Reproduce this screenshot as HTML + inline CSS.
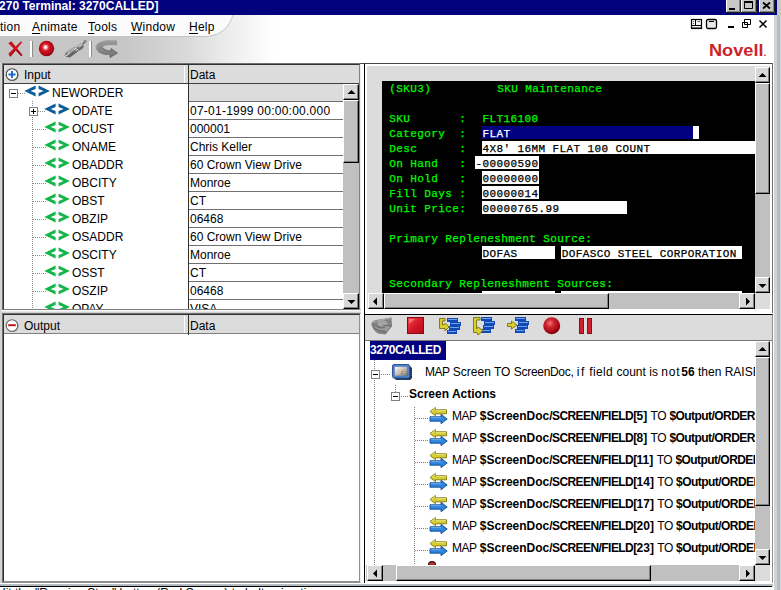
<!DOCTYPE html>
<html>
<head>
<meta charset="utf-8">
<title>3270 Terminal: 3270CALLED</title>
<style>
*{box-sizing:border-box;margin:0;padding:0}
html,body{width:781px;height:590px;overflow:hidden;background:#c8c8c8}
body{position:relative;font-family:"Liberation Sans",Arial,sans-serif;font-size:12px;color:#000}
.abs{position:absolute}
#app{position:absolute;left:0;top:0;width:781px;height:590px;overflow:hidden;background:#fff}
/* title bar */
#title{position:absolute;left:0;top:0;width:777px;height:15px;background:#02027e}
#title .t{position:absolute;left:-1px;top:-2px;font-weight:bold;font-size:13px;color:#fff;white-space:nowrap;letter-spacing:0;transform:scaleX(0.925);transform-origin:0 0}
.wb{position:absolute;top:-3px;height:15px;width:15px;background:#c8c8c8;border:1px solid;border-color:#fff #404040 #404040 #fff;box-shadow:inset -1px -1px 0 #808080}
#frameR{position:absolute;left:777px;top:0;width:4px;height:590px;background:#c8c8c8}
/* menu + toolbar */
#hdr{position:absolute;left:0;top:15px;width:776px;height:48px;background:linear-gradient(90deg,#c5c5c5 0,#c7c7c7 125px,#d9d9d9 185px,#eeeeee 232px,#fff 275px)}
#menu{position:absolute;left:0;top:15px;height:22px;width:240px}
.mi{position:absolute;top:5px;font-size:12px;white-space:nowrap;letter-spacing:0.25px}
.mi u{text-decoration:underline;text-underline-offset:2px}
/* generic */
.hdrcell{position:absolute;background:#dcdcdc;font-size:12px;white-space:nowrap}
.sbtn{position:absolute;background:#c8c8c8;border:1px solid;border-color:#fff #404040 #404040 #fff;box-shadow:inset -1px -1px 0 #808080, inset 1px 1px 0 #dcdcdc}
.track{position:absolute;background:#c0c0c0}
.row{position:absolute;left:0;height:18px;white-space:nowrap;font-size:12px}
.mono{font-family:"Liberation Mono","Courier New",monospace}
</style>
</head>
<body>
<div id="app">
<!-- TITLE -->
<div id="title"><span class="t">270 Terminal: 3270CALLED]</span></div>
<div id="frameR"></div>
<!-- HEADER -->
<div id="hdr"></div>

<svg class="abs" style="left:0;top:15px" width="240" height="23" viewBox="0 0 240 23">
<path d="M0,0 L233,0 C230,9 224,21 204,21.5 L0,21.5 Z" fill="#fbfbfb"/>
<path d="M233,0 C230,9 224,21 204,21.5 L0,21.5" fill="none" stroke="#c4c4c4" stroke-width="1"/>
</svg>
<div id="menu">
<span class="mi" style="left:0">tion</span>
<span class="mi" style="left:32px"><u>A</u>nimate</span>
<span class="mi" style="left:88px"><u>T</u>ools</span>
<span class="mi" style="left:131px"><u>W</u>indow</span>
<span class="mi" style="left:189px"><u>H</u>elp</span>
</div>
<!-- toolbar icons -->
<svg class="abs" style="left:0;top:37px" width="130" height="26" viewBox="0 0 130 26">
<defs>
<radialGradient id="rb" cx="0.44" cy="0.42" r="0.56"><stop offset="0" stop-color="#fff"/><stop offset="0.16" stop-color="#ffd8d8"/><stop offset="0.32" stop-color="#e84048"/><stop offset="0.5" stop-color="#c81020"/><stop offset="0.85" stop-color="#b00818"/><stop offset="1" stop-color="#900010"/></radialGradient>
<linearGradient id="sw" x1="0" y1="0" x2="0" y2="1"><stop offset="0" stop-color="#9c9c9c"/><stop offset="1" stop-color="#747474"/></linearGradient>
</defs>
<path d="M8.300,6.200 L11.300,4.200 L22.600,18 L21.300,19.300 Z" fill="#cc1020"/>
<path d="M22.400,5 L20.800,4.400 L8.300,16.800 L10.400,19.600 Z" fill="#cc1020"/>
<path d="M9.500,18.500 L10.400,19.300 L15.500,13 M17,13.500 L21.500,19" stroke="#500008" stroke-width="0.7" fill="none"/>
<rect x="30" y="4" width="2" height="16" fill="#fff"/><rect x="32" y="4" width="1" height="16" fill="#8c8c8c"/>
<circle cx="46.500" cy="11.500" r="7.700" fill="url(#rb)"/>
<g>
<path d="M64.500,19 L66,15.500 L74,10 L78,11 L78,14.500 L70,20.500 L66.500,20 Z" fill="#666"/>
<path d="M66,15.500 L74,10 L78,11 L70,16.500 Z" fill="#a8a8a8"/>
<path d="M64.600,19.600 L69.500,16.300" stroke="#e4e4e4" stroke-width="1.100"/>
<path d="M76.500,9.500 L80.500,6.500 L83.500,7.500 L83.500,10.800 L79.500,13.800 L76.500,12.800 Z" fill="#6c6c6c"/>
<path d="M76.500,9.500 L80.500,6.500 L83.500,7.500 L79.500,10.500 Z" fill="#b8b8b8"/>
<path d="M74.300,12.400 L76.800,10.600 M75.600,13.900 L78.100,12.100" stroke="#f6f6f6" stroke-width="0.9"/>
<path d="M82.800,7 L85,4.800" stroke="#6c6c6c" stroke-width="1.700"/>
<circle cx="85.200" cy="4.300" r="1.100" fill="#c8c8c8" stroke="#585858" stroke-width="0.7"/>
</g>
<rect x="89" y="4" width="2" height="16" fill="#fff"/><rect x="91" y="4" width="1" height="16" fill="#8c8c8c"/>
<path d="M117,3.500 L117,8.500 C110,7.500 104,8 102.500,10.500 C104,13 108,14 111,14 L111,11.500 L117.500,16 L110,20.500 L110,18 C102,18.500 96,15.500 96,10 C96,5 106,2.500 117,3.500 Z" fill="url(#sw)"/>
<path d="M117,3.500 C106,2.500 96,5 96,10 C96,12 97,14 99,15.500" fill="none" stroke="#a8a8a8" stroke-width="1"/>
<path d="M102.500,10.500 C104,13 108,14 111,14 L111,11.500 L117.500,16 L110,20.500 L110,18" fill="none" stroke="#5c5c5c" stroke-width="0.8"/>
</svg>
<!-- mdi buttons / logo -->
<svg class="abs" style="left:686px;top:15px" width="90" height="20" viewBox="0 0 90 20">
<rect x="5.500" y="4.500" width="10" height="9" fill="#f4f4f4" stroke="#000" stroke-width="1.200"/><path d="M9.500,4.500 V10.500 M5.500,10.500 H15.500" stroke="#000" fill="none"/><rect x="5" y="12.500" width="11" height="1.500" fill="#000"/><path d="M7,6.500 H8 M7,8.500 H8 M11.500,6.500 H14" stroke="#606060"/>
<rect x="20.500" y="4.500" width="10" height="9" rx="1.500" fill="#e8e8e8" stroke="#000" stroke-width="1.300"/><path d="M23,6.500 H28" stroke="#000"/>
<rect x="42" y="11" width="6" height="2" fill="#000"/>
<path d="M58.500,4.500 H64.500 V9.500 H58.500 Z M56.500,7.500 H61.500 V12.500 H56.500 Z" fill="#fff" stroke="#000"/>
<path d="M73.500,5.500 L80.500,12.500 M80.500,5.500 L73.500,12.500" stroke="#000" stroke-width="1.5"/>
</svg>
<div class="abs" style="left:709px;top:42px;font-size:16px;font-weight:bold;color:#cc2229;letter-spacing:0;transform:scaleX(1.135);transform-origin:0 0;white-space:nowrap">Novell<span style="font-size:9px">.</span></div>
<!-- window buttons -->
<svg class="abs" style="left:724px;top:0" width="53" height="15" viewBox="0 0 53 15">
<g>
<rect x="2" y="-3" width="15" height="16" fill="#c8c8c8"/><path d="M2.500,13 V-3" stroke="#fff"/><path d="M16.500,-3 V12.500 H2" stroke="#202020" fill="none"/><path d="M15.500,-3 V11.500 H3" stroke="#808080" fill="none"/>
<rect x="5" y="8" width="6" height="2" fill="#000"/>
<rect x="17" y="-3" width="16" height="16" fill="#c8c8c8"/><path d="M17.500,13 V-3" stroke="#fff"/><path d="M32.500,-3 V12.500 H17" stroke="#202020" fill="none"/><path d="M31.500,-3 V11.500 H18" stroke="#808080" fill="none"/>
<path d="M20.500,2 V8.500 H28.500 V2" stroke="#000" fill="none"/><rect x="20" y="1" width="9" height="2" fill="#000"/>
<rect x="35" y="-3" width="16" height="16" fill="#c8c8c8"/><path d="M35.500,13 V-3" stroke="#fff"/><path d="M50.500,-3 V12.500 H35" stroke="#202020" fill="none"/><path d="M49.500,-3 V11.500 H36" stroke="#808080" fill="none"/>
<path d="M39,2.500 L46,8.500 M46,2.500 L39,8.500" stroke="#000" stroke-width="1.700"/>
</g>
</svg>
<!--LEFT_START-->
<div class="abs" style="left:0;top:63px;width:776px;height:527px;background:#dcdcdc"></div>
<div class="abs" style="left:0;top:63px;width:2px;height:527px;background:#d4d4d4"></div>
<div class="abs" style="left:2px;top:63px;width:359px;height:247px;background:#fff;border-left:1px solid #707070;border-top:1px solid #707070;border-right:1px solid #f0f0f0;border-bottom:1px solid #808080"></div>
<div class="abs" style="left:3px;top:64px;width:357px;height:245px;border-left:1px solid #303030;border-top:1px solid #303030;border-right:1px solid #808080"></div>
<div class="abs" style="left:4px;top:65px;width:355px;height:19px;background:#dcdcdc;border-bottom:1px solid #404040"></div>
<div class="abs" style="left:184px;top:66px;width:1px;height:17px;background:#fff"></div>
<svg class="abs" style="left:4.500px;top:67px" width="15" height="15" viewBox="0 0 15 15"><defs><linearGradient id="cg" x1="0" y1="0" x2="1" y2="1"><stop offset="0" stop-color="#303030"/><stop offset="1" stop-color="#b0b0b0"/></linearGradient></defs><circle cx="7.600" cy="8.100" r="6" fill="#8c8c8c"/><circle cx="7" cy="7.500" r="5.800" fill="#fff" stroke="#484848" stroke-width="1.100"/><path d="M3.500,7.500 H10.500 M7,4 V11" stroke="#1468c8" stroke-width="1.900"/></svg>
<div class="abs" style="left:24px;top:68px;font-size:12px">Input</div>
<div class="abs" style="left:190px;top:68px;font-size:12px">Data</div>
<div class="abs" style="left:5px;top:84px;width:338px;height:225px;overflow:hidden">
<svg class="abs" style="left:4px;top:5px" width="9" height="9" viewBox="0 0 9 9"><rect x="0.500" y="0.500" width="8" height="8" fill="#fff" stroke="#808080"/><path d="M2,4.500 H7" stroke="#000"/></svg>
<div class="abs" style="left:13px;top:9px;width:8px;height:1px;background:repeating-linear-gradient(90deg,#8c8c8c 0 1px,transparent 1px 2px)"></div>
<svg class="abs" style="left:19px;top:2px;overflow:visible" width="27" height="11" viewBox="-1 0 27 11"><path d="M-0.700,5 L10.600,-0.400 L10.600,2.900 L5.600,5 L10.600,7.100 L10.600,10.400 Z" fill="#0b5d98"/><path d="M24.900,5 L13.600,-0.400 L13.600,2.900 L18.600,5 L13.600,7.100 L13.600,10.400 Z" fill="#0b5d98"/></svg>
<div class="abs" style="left:47px;top:2px;font-size:12px;white-space:nowrap">NEWORDER</div>
<div class="abs" style="left:184px;top:0px;width:154px;height:18px;background:#dcdcdc;border-bottom:1px solid #707070;padding:2px 0 0 1px;font-size:12px;white-space:nowrap;overflow:hidden"></div>
<div class="abs" style="left:33px;top:27px;width:8px;height:1px;background:repeating-linear-gradient(90deg,#8c8c8c 0 1px,transparent 1px 2px)"></div>
<svg class="abs" style="left:39px;top:20px;overflow:visible" width="27" height="11" viewBox="-1 0 27 11"><path d="M-0.700,5 L10.600,-0.400 L10.600,2.900 L5.600,5 L10.600,7.100 L10.600,10.400 Z" fill="#0b5d98"/><path d="M24.900,5 L13.600,-0.400 L13.600,2.900 L18.600,5 L13.600,7.100 L13.600,10.400 Z" fill="#0b5d98"/></svg>
<div class="abs" style="left:67px;top:20px;font-size:12px;white-space:nowrap">ODATE</div>
<div class="abs" style="left:184px;top:18px;width:154px;height:18px;background:#fff;border-bottom:1px solid #707070;padding:2px 0 0 1px;font-size:12px;white-space:nowrap;overflow:hidden"><span style="letter-spacing:0.24px">07-01-1999 00:00:00.000</span></div>
<div class="abs" style="left:28px;top:45px;width:13px;height:1px;background:repeating-linear-gradient(90deg,#8c8c8c 0 1px,transparent 1px 2px)"></div>
<svg class="abs" style="left:39px;top:38px;overflow:visible" width="27" height="11" viewBox="-1 0 27 11"><path d="M-0.700,5 L10.600,-0.400 L10.600,2.900 L5.600,5 L10.600,7.100 L10.600,10.400 Z" fill="#14b54a"/><path d="M24.900,5 L13.600,-0.400 L13.600,2.900 L18.600,5 L13.600,7.100 L13.600,10.400 Z" fill="#14b54a"/></svg>
<div class="abs" style="left:67px;top:38px;font-size:12px;white-space:nowrap">OCUST</div>
<div class="abs" style="left:184px;top:36px;width:154px;height:18px;background:#fff;border-bottom:1px solid #707070;padding:2px 0 0 1px;font-size:12px;white-space:nowrap;overflow:hidden">000001</div>
<div class="abs" style="left:28px;top:63px;width:13px;height:1px;background:repeating-linear-gradient(90deg,#8c8c8c 0 1px,transparent 1px 2px)"></div>
<svg class="abs" style="left:39px;top:56px;overflow:visible" width="27" height="11" viewBox="-1 0 27 11"><path d="M-0.700,5 L10.600,-0.400 L10.600,2.900 L5.600,5 L10.600,7.100 L10.600,10.400 Z" fill="#14b54a"/><path d="M24.900,5 L13.600,-0.400 L13.600,2.900 L18.600,5 L13.600,7.100 L13.600,10.400 Z" fill="#14b54a"/></svg>
<div class="abs" style="left:67px;top:56px;font-size:12px;white-space:nowrap">ONAME</div>
<div class="abs" style="left:184px;top:54px;width:154px;height:18px;background:#fff;border-bottom:1px solid #707070;padding:2px 0 0 1px;font-size:12px;white-space:nowrap;overflow:hidden">Chris Keller</div>
<div class="abs" style="left:28px;top:81px;width:13px;height:1px;background:repeating-linear-gradient(90deg,#8c8c8c 0 1px,transparent 1px 2px)"></div>
<svg class="abs" style="left:39px;top:74px;overflow:visible" width="27" height="11" viewBox="-1 0 27 11"><path d="M-0.700,5 L10.600,-0.400 L10.600,2.900 L5.600,5 L10.600,7.100 L10.600,10.400 Z" fill="#14b54a"/><path d="M24.900,5 L13.600,-0.400 L13.600,2.900 L18.600,5 L13.600,7.100 L13.600,10.400 Z" fill="#14b54a"/></svg>
<div class="abs" style="left:67px;top:74px;font-size:12px;white-space:nowrap">OBADDR</div>
<div class="abs" style="left:184px;top:72px;width:154px;height:18px;background:#fff;border-bottom:1px solid #707070;padding:2px 0 0 1px;font-size:12px;white-space:nowrap;overflow:hidden">60 Crown View Drive</div>
<div class="abs" style="left:28px;top:99px;width:13px;height:1px;background:repeating-linear-gradient(90deg,#8c8c8c 0 1px,transparent 1px 2px)"></div>
<svg class="abs" style="left:39px;top:92px;overflow:visible" width="27" height="11" viewBox="-1 0 27 11"><path d="M-0.700,5 L10.600,-0.400 L10.600,2.900 L5.600,5 L10.600,7.100 L10.600,10.400 Z" fill="#14b54a"/><path d="M24.900,5 L13.600,-0.400 L13.600,2.900 L18.600,5 L13.600,7.100 L13.600,10.400 Z" fill="#14b54a"/></svg>
<div class="abs" style="left:67px;top:92px;font-size:12px;white-space:nowrap">OBCITY</div>
<div class="abs" style="left:184px;top:90px;width:154px;height:18px;background:#fff;border-bottom:1px solid #707070;padding:2px 0 0 1px;font-size:12px;white-space:nowrap;overflow:hidden">Monroe</div>
<div class="abs" style="left:28px;top:117px;width:13px;height:1px;background:repeating-linear-gradient(90deg,#8c8c8c 0 1px,transparent 1px 2px)"></div>
<svg class="abs" style="left:39px;top:110px;overflow:visible" width="27" height="11" viewBox="-1 0 27 11"><path d="M-0.700,5 L10.600,-0.400 L10.600,2.900 L5.600,5 L10.600,7.100 L10.600,10.400 Z" fill="#14b54a"/><path d="M24.900,5 L13.600,-0.400 L13.600,2.900 L18.600,5 L13.600,7.100 L13.600,10.400 Z" fill="#14b54a"/></svg>
<div class="abs" style="left:67px;top:110px;font-size:12px;white-space:nowrap">OBST</div>
<div class="abs" style="left:184px;top:108px;width:154px;height:18px;background:#fff;border-bottom:1px solid #707070;padding:2px 0 0 1px;font-size:12px;white-space:nowrap;overflow:hidden">CT</div>
<div class="abs" style="left:28px;top:135px;width:13px;height:1px;background:repeating-linear-gradient(90deg,#8c8c8c 0 1px,transparent 1px 2px)"></div>
<svg class="abs" style="left:39px;top:128px;overflow:visible" width="27" height="11" viewBox="-1 0 27 11"><path d="M-0.700,5 L10.600,-0.400 L10.600,2.900 L5.600,5 L10.600,7.100 L10.600,10.400 Z" fill="#14b54a"/><path d="M24.900,5 L13.600,-0.400 L13.600,2.900 L18.600,5 L13.600,7.100 L13.600,10.400 Z" fill="#14b54a"/></svg>
<div class="abs" style="left:67px;top:128px;font-size:12px;white-space:nowrap">OBZIP</div>
<div class="abs" style="left:184px;top:126px;width:154px;height:18px;background:#fff;border-bottom:1px solid #707070;padding:2px 0 0 1px;font-size:12px;white-space:nowrap;overflow:hidden">06468</div>
<div class="abs" style="left:28px;top:153px;width:13px;height:1px;background:repeating-linear-gradient(90deg,#8c8c8c 0 1px,transparent 1px 2px)"></div>
<svg class="abs" style="left:39px;top:146px;overflow:visible" width="27" height="11" viewBox="-1 0 27 11"><path d="M-0.700,5 L10.600,-0.400 L10.600,2.900 L5.600,5 L10.600,7.100 L10.600,10.400 Z" fill="#14b54a"/><path d="M24.900,5 L13.600,-0.400 L13.600,2.900 L18.600,5 L13.600,7.100 L13.600,10.400 Z" fill="#14b54a"/></svg>
<div class="abs" style="left:67px;top:146px;font-size:12px;white-space:nowrap">OSADDR</div>
<div class="abs" style="left:184px;top:144px;width:154px;height:18px;background:#fff;border-bottom:1px solid #707070;padding:2px 0 0 1px;font-size:12px;white-space:nowrap;overflow:hidden">60 Crown View Drive</div>
<div class="abs" style="left:28px;top:171px;width:13px;height:1px;background:repeating-linear-gradient(90deg,#8c8c8c 0 1px,transparent 1px 2px)"></div>
<svg class="abs" style="left:39px;top:164px;overflow:visible" width="27" height="11" viewBox="-1 0 27 11"><path d="M-0.700,5 L10.600,-0.400 L10.600,2.900 L5.600,5 L10.600,7.100 L10.600,10.400 Z" fill="#14b54a"/><path d="M24.900,5 L13.600,-0.400 L13.600,2.900 L18.600,5 L13.600,7.100 L13.600,10.400 Z" fill="#14b54a"/></svg>
<div class="abs" style="left:67px;top:164px;font-size:12px;white-space:nowrap">OSCITY</div>
<div class="abs" style="left:184px;top:162px;width:154px;height:18px;background:#fff;border-bottom:1px solid #707070;padding:2px 0 0 1px;font-size:12px;white-space:nowrap;overflow:hidden">Monroe</div>
<div class="abs" style="left:28px;top:189px;width:13px;height:1px;background:repeating-linear-gradient(90deg,#8c8c8c 0 1px,transparent 1px 2px)"></div>
<svg class="abs" style="left:39px;top:182px;overflow:visible" width="27" height="11" viewBox="-1 0 27 11"><path d="M-0.700,5 L10.600,-0.400 L10.600,2.900 L5.600,5 L10.600,7.100 L10.600,10.400 Z" fill="#14b54a"/><path d="M24.900,5 L13.600,-0.400 L13.600,2.900 L18.600,5 L13.600,7.100 L13.600,10.400 Z" fill="#14b54a"/></svg>
<div class="abs" style="left:67px;top:182px;font-size:12px;white-space:nowrap">OSST</div>
<div class="abs" style="left:184px;top:180px;width:154px;height:18px;background:#fff;border-bottom:1px solid #707070;padding:2px 0 0 1px;font-size:12px;white-space:nowrap;overflow:hidden">CT</div>
<div class="abs" style="left:28px;top:207px;width:13px;height:1px;background:repeating-linear-gradient(90deg,#8c8c8c 0 1px,transparent 1px 2px)"></div>
<svg class="abs" style="left:39px;top:200px;overflow:visible" width="27" height="11" viewBox="-1 0 27 11"><path d="M-0.700,5 L10.600,-0.400 L10.600,2.900 L5.600,5 L10.600,7.100 L10.600,10.400 Z" fill="#14b54a"/><path d="M24.900,5 L13.600,-0.400 L13.600,2.900 L18.600,5 L13.600,7.100 L13.600,10.400 Z" fill="#14b54a"/></svg>
<div class="abs" style="left:67px;top:200px;font-size:12px;white-space:nowrap">OSZIP</div>
<div class="abs" style="left:184px;top:198px;width:154px;height:18px;background:#fff;border-bottom:1px solid #707070;padding:2px 0 0 1px;font-size:12px;white-space:nowrap;overflow:hidden">06468</div>
<div class="abs" style="left:28px;top:225px;width:13px;height:1px;background:repeating-linear-gradient(90deg,#8c8c8c 0 1px,transparent 1px 2px)"></div>
<svg class="abs" style="left:39px;top:218px;overflow:visible" width="27" height="11" viewBox="-1 0 27 11"><path d="M-0.700,5 L10.600,-0.400 L10.600,2.900 L5.600,5 L10.600,7.100 L10.600,10.400 Z" fill="#14b54a"/><path d="M24.900,5 L13.600,-0.400 L13.600,2.900 L18.600,5 L13.600,7.100 L13.600,10.400 Z" fill="#14b54a"/></svg>
<div class="abs" style="left:67px;top:218px;font-size:12px;white-space:nowrap">OPAY</div>
<div class="abs" style="left:184px;top:216px;width:154px;height:18px;background:#fff;border-bottom:1px solid #707070;padding:2px 0 0 1px;font-size:12px;white-space:nowrap;overflow:hidden">VISA</div>
<div class="abs" style="left:27px;top:17px;width:1px;height:210px;background:repeating-linear-gradient(180deg,#8c8c8c 0 1px,transparent 1px 2px)"></div>
<svg class="abs" style="left:24px;top:23px" width="9" height="9" viewBox="0 0 9 9"><rect x="0.500" y="0.500" width="8" height="8" fill="#fff" stroke="#808080"/><path d="M2,4.500 H7" stroke="#000"/><path d="M4.500,2 V7" stroke="#000"/></svg>
</div>
<div class="abs" style="left:188px;top:65px;width:1px;height:244px;background:#303030"></div>
<div class="abs" style="left:343px;top:84px;width:16px;height:225px;background:#c0c0c0"></div>
<div class="abs" style="left:343px;top:84px;width:16px;height:16px;background:#d8d8d8;border:1px solid;border-color:#fff #000 #000 #fff;box-shadow:inset -1px -1px 0 #808080"></div>
<svg class="abs" style="left:347px;top:89px" width="9" height="6" viewBox="0 0 9 6"><path d="M0.500,5 L4.500,1 L8.500,5 Z" fill="#000"/></svg>
<div class="abs" style="left:343px;top:100px;width:16px;height:63px;background:#c0c0c0;border:1px solid;border-color:#fff #000 #000 #fff;box-shadow:inset -1px -1px 0 #808080"></div>
<div class="abs" style="left:343px;top:293px;width:16px;height:16px;background:#d8d8d8;border:1px solid;border-color:#fff #000 #000 #fff;box-shadow:inset -1px -1px 0 #808080"></div>
<svg class="abs" style="left:347px;top:299px" width="9" height="6" viewBox="0 0 9 6"><path d="M0.500,1 L4.500,5 L8.500,1 Z" fill="#000"/></svg>
<!--LEFT_END-->

<!--RIGHT_START-->
<div class="abs" style="left:361px;top:63px;width:3px;height:520px;background:#fff"></div>
<div class="abs" style="left:360px;top:63px;width:4px;height:1px;background:#505050"></div>
<div class="abs" style="left:2px;top:310px;width:359px;height:3px;background:linear-gradient(180deg,#fff,#e8e8e8 50%,#c8c8c8)"></div>
<div class="abs" style="left:2px;top:313px;width:359px;height:270px;background:#fff;border-left:1px solid #707070;border-top:1px solid #707070;border-right:1px solid #f0f0f0;border-bottom:1px solid #909090"></div>
<div class="abs" style="left:3px;top:314px;width:357px;height:268px;border-left:1px solid #303030;border-top:1px solid #303030;border-right:1px solid #909090;border-bottom:1px solid #909090"></div>
<div class="abs" style="left:4px;top:315px;width:355px;height:19px;background:#dcdcdc;border-bottom:1px solid #808080"></div>
<div class="abs" style="left:184px;top:316px;width:1px;height:17px;background:#fff"></div>
<div class="abs" style="left:188px;top:315px;width:1px;height:20px;background:#303030"></div>
<svg class="abs" style="left:4.500px;top:318px" width="15" height="15" viewBox="0 0 15 15"><defs><linearGradient id="cg2" x1="0" y1="0" x2="1" y2="1"><stop offset="0" stop-color="#a0a0a0"/><stop offset="1" stop-color="#505050"/></linearGradient></defs><circle cx="7.600" cy="8.100" r="6" fill="#8c8c8c"/><circle cx="7" cy="7.500" r="5.800" fill="#fff" stroke="#686868" stroke-width="1.100"/><path d="M3.200,7.200 H10.800" stroke="#c01420" stroke-width="2"/></svg>
<div class="abs" style="left:24px;top:319px;font-size:12px">Output</div>
<div class="abs" style="left:190px;top:319px;font-size:12px">Data</div>
<div class="abs" style="left:364px;top:63px;width:409px;height:250px;background:#dcdcdc;border-top:1px solid #484848;border-left:1px solid #000;border-right:1px solid #707070"></div>
<div class="abs" style="left:365px;top:64px;width:407px;height:2px;background:#fff"></div>
<div class="abs" style="left:365px;top:65px;width:2px;height:248px;background:#fff"></div>
<div class="abs" style="left:770px;top:65px;width:2px;height:248px;background:#fff"></div>
<div class="abs" style="left:365px;top:309px;width:407px;height:4px;background:#fff"></div>
<div class="abs mono" style="left:368px;top:67px;width:387px;height:226px;overflow:hidden;background:#dcdcdc;font-size:11px;line-height:15px;letter-spacing:0.4px;white-space:pre;-webkit-text-stroke:0.25px;color:#00fa00">
<div class="abs" style="left:14px;top:14px;width:600px;height:400px;background:#000"></div>
<span class="abs" style="left:21.2px;top:15px">(SKU3)</span>
<span class="abs" style="left:129.2px;top:15px">SKU Maintenance</span>
<span class="abs" style="left:21.2px;top:45px">SKU       :</span>
<span class="abs" style="left:21.2px;top:60px">Category  :</span>
<span class="abs" style="left:21.2px;top:75px">Desc      :</span>
<span class="abs" style="left:21.2px;top:90px">On Hand   :</span>
<span class="abs" style="left:21.2px;top:105px">On Hold   :</span>
<span class="abs" style="left:21.2px;top:120px">Fill Days :</span>
<span class="abs" style="left:21.2px;top:135px">Unit Price:</span>
<span class="abs" style="left:114.6px;top:45px">FLT16100</span>
<div class="abs" style="left:114.0px;top:59.3px;width:216.8px;height:12.300px;background:#fff"></div>
<div class="abs" style="left:114.0px;top:59.3px;width:211.2px;height:12.300px;background:#000080"></div>
<span class="abs" style="left:114.6px;top:60px;color:#fff;-webkit-text-stroke:0.25px">FLAT</span>
<div class="abs" style="left:114.0px;top:74.3px;width:432.8px;height:12.300px;background:#fff"></div>
<span class="abs" style="left:114.6px;top:75px;color:#000;-webkit-text-stroke:0.25px">4X8' 16MM FLAT 100 COUNT</span>
<div class="abs" style="left:106.8px;top:89.3px;width:64.4px;height:12.300px;background:#fff"></div>
<span class="abs" style="left:107.4px;top:90px;color:#000;-webkit-text-stroke:0.25px">-00000590</span>
<div class="abs" style="left:114.0px;top:104.3px;width:57.2px;height:12.300px;background:#fff"></div>
<span class="abs" style="left:114.6px;top:105px;color:#000;-webkit-text-stroke:0.25px">00000000</span>
<div class="abs" style="left:114.0px;top:119.3px;width:57.2px;height:12.300px;background:#fff"></div>
<span class="abs" style="left:114.6px;top:120px;color:#000;-webkit-text-stroke:0.25px">00000014</span>
<div class="abs" style="left:114.0px;top:134.3px;width:144.8px;height:12.300px;background:#fff"></div>
<span class="abs" style="left:114.6px;top:135px;color:#000;-webkit-text-stroke:0.25px">00000765.99</span>
<span class="abs" style="left:21.2px;top:165px">Primary Repleneshment Source:</span>
<div class="abs" style="left:114.0px;top:179.3px;width:72.8px;height:12.300px;background:#fff"></div>
<span class="abs" style="left:114.6px;top:180px;color:#000;-webkit-text-stroke:0.25px">DOFAS</span>
<div class="abs" style="left:193.2px;top:179.3px;width:180.8px;height:12.300px;background:#fff"></div>
<span class="abs" style="left:193.8px;top:180px;color:#000;-webkit-text-stroke:0.25px">DOFASCO STEEL CORPORATION</span>
<span class="abs" style="left:21.2px;top:210px">Secondary Repleneshment Sources:</span>
<div class="abs" style="left:114.0px;top:224.3px;width:72.8px;height:12.300px;background:#fff"></div>
<div class="abs" style="left:193.2px;top:224.3px;width:180.8px;height:12.300px;background:#fff"></div>
</div>
<div class="abs" style="left:755px;top:67px;width:15px;height:226px;background:#c0c0c0"></div>
<div class="abs" style="left:755px;top:67px;width:15px;height:16px;background:#d8d8d8;border:1px solid;border-color:#fff #000 #000 #fff;box-shadow:inset -1px -1px 0 #808080"></div>
<svg class="abs" style="left:758px;top:72px" width="9" height="6" viewBox="0 0 9 6"><path d="M0.500,5 L4.500,1 L8.500,5 Z" fill="#000"/></svg>
<div class="abs" style="left:755px;top:83px;width:15px;height:111px;background:#c0c0c0;border:1px solid;border-color:#fff #000 #000 #fff;box-shadow:inset -1px -1px 0 #808080"></div>
<div class="abs" style="left:755px;top:277px;width:15px;height:16px;background:#d8d8d8;border:1px solid;border-color:#fff #000 #000 #fff;box-shadow:inset -1px -1px 0 #808080"></div>
<svg class="abs" style="left:758px;top:283px" width="9" height="6" viewBox="0 0 9 6"><path d="M0.500,1 L4.500,5 L8.500,1 Z" fill="#000"/></svg>
<div class="abs" style="left:368px;top:293px;width:387px;height:16px;background:#c0c0c0"></div>
<div class="abs" style="left:368px;top:293px;width:16px;height:16px;background:#d8d8d8;border:1px solid;border-color:#fff #000 #000 #fff;box-shadow:inset -1px -1px 0 #808080"></div>
<svg class="abs" style="left:372px;top:297px" width="6" height="9" viewBox="0 0 6 9"><path d="M5,0.500 L1,4.500 L5,8.500 Z" fill="#000"/></svg>
<div class="abs" style="left:384px;top:293px;width:225px;height:16px;background:#c0c0c0;border:1px solid;border-color:#fff #000 #000 #fff;box-shadow:inset -1px -1px 0 #808080"></div>
<div class="abs" style="left:739px;top:293px;width:16px;height:16px;background:#d8d8d8;border:1px solid;border-color:#fff #000 #000 #fff;box-shadow:inset -1px -1px 0 #808080"></div>
<svg class="abs" style="left:745px;top:297px" width="6" height="9" viewBox="0 0 6 9"><path d="M1,0.500 L5,4.500 L1,8.500 Z" fill="#000"/></svg>
<div class="abs" style="left:755px;top:293px;width:15px;height:16px;background:#dcdcdc"></div>
<!--RIGHT_END-->
<!--TREE_START-->
<div class="abs" style="left:365px;top:313px;width:408px;height:1px;background:#fff"></div><div class="abs" style="left:364px;top:309px;width:1px;height:6px;background:#000"></div><div class="abs" style="left:364px;top:314px;width:409px;height:269px;background:#fff;border-top:1px solid #000;border-left:1px solid #000;border-right:1px solid #909090"></div>
<div class="abs" style="left:365px;top:315px;width:407px;height:26px;background:#dcdcdc;border-bottom:1px solid #787878"></div>
<svg class="abs" style="left:366px;top:315px" width="240" height="24" viewBox="0 0 240 24">
<defs>
<radialGradient id="rb2" cx="0.40" cy="0.35" r="0.65"><stop offset="0" stop-color="#f07880"/><stop offset="0.35" stop-color="#d02830"/><stop offset="0.8" stop-color="#a80818"/><stop offset="1" stop-color="#700008"/></radialGradient>
<linearGradient id="rs" x1="0" y1="0" x2="1" y2="1"><stop offset="0" stop-color="#f04848"/><stop offset="0.5" stop-color="#d81828"/><stop offset="1" stop-color="#b00818"/></linearGradient>
<linearGradient id="gs" x1="0" y1="0" x2="0" y2="1"><stop offset="0" stop-color="#b0b0b0"/><stop offset="1" stop-color="#707070"/></linearGradient>
</defs>
<!-- gray undo swoosh -->
<path d="M5.500,9.500 C5,6.500 9,5 13,4.500 C18,3.800 22,3.500 25.500,2.200 L26,11 L19,19.600 L12,18.500 C8,16 5.800,12.500 5.500,9.500 Z" fill="#828282"/>
<path d="M7,8 C9,5.500 16,4.500 25,3" stroke="#a8a8a8" stroke-width="1.200" fill="none"/>
<ellipse cx="16.500" cy="8.500" rx="5" ry="3.300" fill="#a4a4a4"/>
<path d="M8,9.500 C11,13 15.500,13.500 18.500,12.500 L17.500,10.300 L25.500,11 L19.500,18.800 L18.800,15.800 C13,16.500 8.500,13.500 7,10.500 Z" fill="#9c9c9c" stroke="#5c5c5c" stroke-width="0.7"/>
<!-- red square -->
<rect x="41.500" y="2.500" width="16" height="16" fill="url(#rs)" stroke="#8c0814"/>
<path d="M43,9 L43,4 L49,4 Z" fill="#f89098" opacity="0.7"/>
<!-- step icons -->
<g id="bl1">
<rect x="81" y="3" width="11" height="4" fill="#1448b4"/><rect x="82" y="4" width="9" height="1" fill="#68a4f0"/>
<rect x="84" y="7" width="11" height="4" fill="#1448b4"/><rect x="85" y="8" width="9" height="1" fill="#68a4f0"/>
<rect x="83" y="11" width="11" height="4" fill="#1448b4"/><rect x="84" y="12" width="9" height="1" fill="#68a4f0"/>
<rect x="81" y="15" width="10" height="4" fill="#1448b4"/><rect x="82" y="16" width="8" height="1" fill="#68a4f0"/>
</g>
<path d="M73.500,3.500 H79 V6 H76.500 V10 L80,8.500 L83,12 L79,16 L79,13.500 H73.500 Z" fill="#d8d030" stroke="#787010" stroke-width="0.9"/>
<g>
<rect x="115" y="2" width="11" height="4" fill="#1448b4"/><rect x="116" y="3" width="9" height="1" fill="#68a4f0"/>
<rect x="118" y="6" width="11" height="4" fill="#1448b4"/><rect x="119" y="7" width="9" height="1" fill="#68a4f0"/>
<rect x="117" y="10" width="11" height="4" fill="#1448b4"/><rect x="118" y="11" width="9" height="1" fill="#68a4f0"/>
<rect x="115" y="14" width="10" height="4" fill="#1448b4"/><rect x="116" y="15" width="8" height="1" fill="#68a4f0"/>
</g>
<path d="M107.500,2.500 H114 V5 H110.500 V14 L112,12 L117,15.500 L112,20 L111,17.500 H107.500 Z" fill="#d8d030" stroke="#787010" stroke-width="0.9"/>
<g>
<rect x="149" y="2" width="11" height="4" fill="#1448b4"/><rect x="150" y="3" width="9" height="1" fill="#68a4f0"/>
<rect x="152" y="6" width="11" height="4" fill="#1448b4"/><rect x="153" y="7" width="9" height="1" fill="#68a4f0"/>
<rect x="151" y="10" width="11" height="4" fill="#1448b4"/><rect x="152" y="11" width="9" height="1" fill="#68a4f0"/>
<rect x="149" y="14" width="10" height="4" fill="#1448b4"/><rect x="150" y="15" width="8" height="1" fill="#68a4f0"/>
</g>
<path d="M141.500,8.500 H145.500 V6 L151,10 L145.500,14 V11.500 H141.500 Z" fill="#d8d030" stroke="#787010" stroke-width="0.9"/>
<!-- red ball -->
<circle cx="185.700" cy="10.700" r="8.500" fill="url(#rb2)"/>
<!-- pause -->
<rect x="213.500" y="3.500" width="4" height="15" fill="#d02030" stroke="#881018"/><rect x="221.500" y="3.500" width="4" height="15" fill="#d02030" stroke="#881018"/>
</svg>
<div class="abs" style="left:366px;top:341px;width:389px;height:224px;overflow:hidden;background:#fff;font-size:12px;white-space:nowrap">
<div class="abs" style="left:4px;top:0px;width:76px;height:19px;background:#000080;color:#fff;font-weight:bold;letter-spacing:-0.45px;padding:2px 0 0 0">3270CALLED</div>
<div class="abs" style="left:8px;top:19px;width:1px;height:210px;background:repeating-linear-gradient(180deg,#808080 0 1px,transparent 1px 2px)"></div>
<div class="abs" style="left:29px;top:44px;width:1px;height:8px;background:repeating-linear-gradient(180deg,#808080 0 1px,transparent 1px 2px)"></div>
<div class="abs" style="left:48px;top:66px;width:1px;height:160px;background:repeating-linear-gradient(180deg,#808080 0 1px,transparent 1px 2px)"></div>
<svg class="abs" style="left:5px;top:29px" width="9" height="9" viewBox="0 0 9 9"><rect x="0.500" y="0.500" width="8" height="8" fill="#fff" stroke="#808080"/><path d="M2,4.500 H7" stroke="#000"/></svg>
<div class="abs" style="left:15px;top:33px;width:10px;height:1px;background:repeating-linear-gradient(90deg,#808080 0 1px,transparent 1px 2px)"></div>
<svg class="abs" style="left:25px;top:22px" width="23" height="18" viewBox="0 0 23 18">
<defs><linearGradient id="scr" x1="0" y1="0" x2="1" y2="1"><stop offset="0" stop-color="#ffffff"/><stop offset="0.45" stop-color="#c8c8c8"/><stop offset="1" stop-color="#707070"/></linearGradient></defs>
<path d="M19,3 L21,5 V15 L19,17 H5 L3,15 Z" fill="#1c2c48"/>
<path d="M19.500,4 V15.500 M20.500,6 V14 M5,16.500 H18" stroke="#5078b0" stroke-width="0.5" stroke-dasharray="1 1"/>
<rect x="1.500" y="1.500" width="17" height="13.500" rx="1.500" fill="#5088d0" stroke="#2c5498"/>
<rect x="3.500" y="3.500" width="13" height="9.500" fill="url(#scr)" stroke="#486898" stroke-width="0.5"/>
<rect x="9" y="6" width="1" height="1" fill="#e8e020"/><rect x="11" y="8" width="1" height="1" fill="#e83030"/><rect x="12" y="5" width="1" height="1" fill="#e8e020"/><rect x="8" y="9" width="1" height="1" fill="#e8e020"/><rect x="13" y="9" width="1" height="1" fill="#e8c020"/><rect x="10" y="10" width="1" height="1" fill="#e83030"/><rect x="7" y="7" width="1" height="1" fill="#e8a0a0"/>
</svg>
<div class="abs" style="left:59px;top:24px"><span style="letter-spacing:-0.5px">MAP</span> Screen TO <span style="letter-spacing:-0.3px">ScreenDoc,</span> <span style="letter-spacing:1.500px">if</span> <span style="letter-spacing:0.4px">field</span> count is <span style="letter-spacing:0.9px">not</span> <b style="margin-left:-2.700px">56</b> then RAISE error</div>
<svg class="abs" style="left:25px;top:51px" width="9" height="9" viewBox="0 0 9 9"><rect x="0.500" y="0.500" width="8" height="8" fill="#fff" stroke="#808080"/><path d="M2,4.500 H7" stroke="#000"/></svg>
<div class="abs" style="left:35px;top:55px;width:8px;height:1px;background:repeating-linear-gradient(90deg,#808080 0 1px,transparent 1px 2px)"></div>
<div class="abs" style="left:43px;top:46px;font-weight:bold">Screen Actions</div>
<div class="abs" style="left:49px;top:77px;width:14px;height:1px;background:repeating-linear-gradient(90deg,#808080 0 1px,transparent 1px 2px)"></div>
<svg class="abs" style="left:63px;top:66px" width="19" height="17" viewBox="0 0 19 17">
<path d="M1,4.500 L6.500,0.500 V2.800 H17.500 V6.800 H6.500 V8.800 Z" fill="#d4cc30" stroke="#80780c" stroke-width="0.9"/>
<path d="M6.500,1.500 L2.500,4.500 M7,3.600 H17" stroke="#f0ec90" stroke-width="0.8" fill="none"/>
<path d="M18.200,12 L12,7.300 V9.800 H1 V14.200 H12 V16.700 Z" fill="#2c84dc" stroke="#104c98" stroke-width="0.9"/>
<path d="M1.800,10.700 H12.500" stroke="#80c0f8" stroke-width="0.8" fill="none"/>
</svg>
<div class="abs" style="left:86px;top:68px"><span style="letter-spacing:-0.5px">MAP</span> <b>$ScreenDoc<span style="letter-spacing:-0.57px">/SCREEN/FIELD[</span>5]</b> <span style="letter-spacing:-0.5px">TO</span> <b style="letter-spacing:-0.55px">$Output/ORDER/LINE</b></div>
<div class="abs" style="left:49px;top:99px;width:14px;height:1px;background:repeating-linear-gradient(90deg,#808080 0 1px,transparent 1px 2px)"></div>
<svg class="abs" style="left:63px;top:88px" width="19" height="17" viewBox="0 0 19 17">
<path d="M1,4.500 L6.500,0.500 V2.800 H17.500 V6.800 H6.500 V8.800 Z" fill="#d4cc30" stroke="#80780c" stroke-width="0.9"/>
<path d="M6.500,1.500 L2.500,4.500 M7,3.600 H17" stroke="#f0ec90" stroke-width="0.8" fill="none"/>
<path d="M18.200,12 L12,7.300 V9.800 H1 V14.200 H12 V16.700 Z" fill="#2c84dc" stroke="#104c98" stroke-width="0.9"/>
<path d="M1.800,10.700 H12.500" stroke="#80c0f8" stroke-width="0.8" fill="none"/>
</svg>
<div class="abs" style="left:86px;top:90px"><span style="letter-spacing:-0.5px">MAP</span> <b>$ScreenDoc<span style="letter-spacing:-0.57px">/SCREEN/FIELD[</span>8]</b> <span style="letter-spacing:-0.5px">TO</span> <b style="letter-spacing:-0.55px">$Output/ORDER/LINE</b></div>
<div class="abs" style="left:49px;top:121px;width:14px;height:1px;background:repeating-linear-gradient(90deg,#808080 0 1px,transparent 1px 2px)"></div>
<svg class="abs" style="left:63px;top:110px" width="19" height="17" viewBox="0 0 19 17">
<path d="M1,4.500 L6.500,0.500 V2.800 H17.500 V6.800 H6.500 V8.800 Z" fill="#d4cc30" stroke="#80780c" stroke-width="0.9"/>
<path d="M6.500,1.500 L2.500,4.500 M7,3.600 H17" stroke="#f0ec90" stroke-width="0.8" fill="none"/>
<path d="M18.200,12 L12,7.300 V9.800 H1 V14.200 H12 V16.700 Z" fill="#2c84dc" stroke="#104c98" stroke-width="0.9"/>
<path d="M1.800,10.700 H12.500" stroke="#80c0f8" stroke-width="0.8" fill="none"/>
</svg>
<div class="abs" style="left:86px;top:112px"><span style="letter-spacing:-0.5px">MAP</span> <b>$ScreenDoc<span style="letter-spacing:-0.57px">/SCREEN/FIELD[</span>11]</b> <span style="letter-spacing:-0.5px">TO</span> <b style="letter-spacing:-0.55px">$Output/ORDER/LINE</b></div>
<div class="abs" style="left:49px;top:143px;width:14px;height:1px;background:repeating-linear-gradient(90deg,#808080 0 1px,transparent 1px 2px)"></div>
<svg class="abs" style="left:63px;top:132px" width="19" height="17" viewBox="0 0 19 17">
<path d="M1,4.500 L6.500,0.500 V2.800 H17.500 V6.800 H6.500 V8.800 Z" fill="#d4cc30" stroke="#80780c" stroke-width="0.9"/>
<path d="M6.500,1.500 L2.500,4.500 M7,3.600 H17" stroke="#f0ec90" stroke-width="0.8" fill="none"/>
<path d="M18.200,12 L12,7.300 V9.800 H1 V14.200 H12 V16.700 Z" fill="#2c84dc" stroke="#104c98" stroke-width="0.9"/>
<path d="M1.800,10.700 H12.500" stroke="#80c0f8" stroke-width="0.8" fill="none"/>
</svg>
<div class="abs" style="left:86px;top:134px"><span style="letter-spacing:-0.5px">MAP</span> <b>$ScreenDoc<span style="letter-spacing:-0.57px">/SCREEN/FIELD[</span>14]</b> <span style="letter-spacing:-0.5px">TO</span> <b style="letter-spacing:-0.55px">$Output/ORDER/LINE</b></div>
<div class="abs" style="left:49px;top:165px;width:14px;height:1px;background:repeating-linear-gradient(90deg,#808080 0 1px,transparent 1px 2px)"></div>
<svg class="abs" style="left:63px;top:154px" width="19" height="17" viewBox="0 0 19 17">
<path d="M1,4.500 L6.500,0.500 V2.800 H17.500 V6.800 H6.500 V8.800 Z" fill="#d4cc30" stroke="#80780c" stroke-width="0.9"/>
<path d="M6.500,1.500 L2.500,4.500 M7,3.600 H17" stroke="#f0ec90" stroke-width="0.8" fill="none"/>
<path d="M18.200,12 L12,7.300 V9.800 H1 V14.200 H12 V16.700 Z" fill="#2c84dc" stroke="#104c98" stroke-width="0.9"/>
<path d="M1.800,10.700 H12.500" stroke="#80c0f8" stroke-width="0.8" fill="none"/>
</svg>
<div class="abs" style="left:86px;top:156px"><span style="letter-spacing:-0.5px">MAP</span> <b>$ScreenDoc<span style="letter-spacing:-0.57px">/SCREEN/FIELD[</span>17]</b> <span style="letter-spacing:-0.5px">TO</span> <b style="letter-spacing:-0.55px">$Output/ORDER/LINE</b></div>
<div class="abs" style="left:49px;top:187px;width:14px;height:1px;background:repeating-linear-gradient(90deg,#808080 0 1px,transparent 1px 2px)"></div>
<svg class="abs" style="left:63px;top:176px" width="19" height="17" viewBox="0 0 19 17">
<path d="M1,4.500 L6.500,0.500 V2.800 H17.500 V6.800 H6.500 V8.800 Z" fill="#d4cc30" stroke="#80780c" stroke-width="0.9"/>
<path d="M6.500,1.500 L2.500,4.500 M7,3.600 H17" stroke="#f0ec90" stroke-width="0.8" fill="none"/>
<path d="M18.200,12 L12,7.300 V9.800 H1 V14.200 H12 V16.700 Z" fill="#2c84dc" stroke="#104c98" stroke-width="0.9"/>
<path d="M1.800,10.700 H12.500" stroke="#80c0f8" stroke-width="0.8" fill="none"/>
</svg>
<div class="abs" style="left:86px;top:178px"><span style="letter-spacing:-0.5px">MAP</span> <b>$ScreenDoc<span style="letter-spacing:-0.57px">/SCREEN/FIELD[</span>20]</b> <span style="letter-spacing:-0.5px">TO</span> <b style="letter-spacing:-0.55px">$Output/ORDER/LINE</b></div>
<div class="abs" style="left:49px;top:209px;width:14px;height:1px;background:repeating-linear-gradient(90deg,#808080 0 1px,transparent 1px 2px)"></div>
<svg class="abs" style="left:63px;top:198px" width="19" height="17" viewBox="0 0 19 17">
<path d="M1,4.500 L6.500,0.500 V2.800 H17.500 V6.800 H6.500 V8.800 Z" fill="#d4cc30" stroke="#80780c" stroke-width="0.9"/>
<path d="M6.500,1.500 L2.500,4.500 M7,3.600 H17" stroke="#f0ec90" stroke-width="0.8" fill="none"/>
<path d="M18.200,12 L12,7.300 V9.800 H1 V14.200 H12 V16.700 Z" fill="#2c84dc" stroke="#104c98" stroke-width="0.9"/>
<path d="M1.800,10.700 H12.500" stroke="#80c0f8" stroke-width="0.8" fill="none"/>
</svg>
<div class="abs" style="left:86px;top:200px"><span style="letter-spacing:-0.5px">MAP</span> <b>$ScreenDoc<span style="letter-spacing:-0.57px">/SCREEN/FIELD[</span>23]</b> <span style="letter-spacing:-0.5px">TO</span> <b style="letter-spacing:-0.55px">$Output/ORDER/LINE</b></div>
<div class="abs" style="left:62px;top:220px;width:8px;height:4px;background:#c02820;border:1px solid #201010;border-bottom:0;border-radius:4px 4px 0 0"></div>
</div>
<div class="abs" style="left:755px;top:341px;width:15px;height:224px;background:#c0c0c0"></div>
<div class="abs" style="left:755px;top:341px;width:15px;height:16px;background:#d8d8d8;border:1px solid;border-color:#fff #000 #000 #fff;box-shadow:inset -1px -1px 0 #808080"></div>
<svg class="abs" style="left:758px;top:346px" width="9" height="6" viewBox="0 0 9 6"><path d="M0.500,5 L4.500,1 L8.500,5 Z" fill="#000"/></svg>
<div class="abs" style="left:755px;top:357px;width:15px;height:149px;background:#c0c0c0;border:1px solid;border-color:#fff #000 #000 #fff;box-shadow:inset -1px -1px 0 #808080"></div>
<div class="abs" style="left:755px;top:549px;width:15px;height:16px;background:#d8d8d8;border:1px solid;border-color:#fff #000 #000 #fff;box-shadow:inset -1px -1px 0 #808080"></div>
<svg class="abs" style="left:758px;top:555px" width="9" height="6" viewBox="0 0 9 6"><path d="M0.500,1 L4.500,5 L8.500,1 Z" fill="#000"/></svg>
<div class="abs" style="left:366px;top:565px;width:389px;height:16px;background:#c0c0c0"></div>
<div class="abs" style="left:367px;top:565px;width:16px;height:16px;background:#d8d8d8;border:1px solid;border-color:#fff #000 #000 #fff;box-shadow:inset -1px -1px 0 #808080"></div>
<svg class="abs" style="left:372px;top:569px" width="6" height="9" viewBox="0 0 6 9"><path d="M5,0.500 L1,4.500 L5,8.500 Z" fill="#000"/></svg>
<div class="abs" style="left:396px;top:565px;width:255px;height:16px;background:#c0c0c0;border:1px solid;border-color:#fff #000 #000 #fff;box-shadow:inset -1px -1px 0 #808080"></div>
<div class="abs" style="left:739px;top:565px;width:16px;height:16px;background:#d8d8d8;border:1px solid;border-color:#fff #000 #000 #fff;box-shadow:inset -1px -1px 0 #808080"></div>
<svg class="abs" style="left:745px;top:569px" width="6" height="9" viewBox="0 0 6 9"><path d="M1,0.500 L5,4.500 L1,8.500 Z" fill="#000"/></svg>
<div class="abs" style="left:755px;top:565px;width:15px;height:16px;background:#dcdcdc"></div>
<div class="abs" style="left:366px;top:581px;width:406px;height:2px;background:#fff"></div>
<!--TREE_END-->
<!--BOTTOM_START-->
<div class="abs" style="left:0;top:583px;width:773px;height:3px;background:linear-gradient(180deg,#fff 0,#fff 33%,#c0c4c8 34%,#a8b0b8)"></div>
<div class="abs" style="left:0;top:586px;width:772px;height:1px;background:#000"></div>
<div class="abs" style="left:0;top:587px;width:773px;height:3px;background:#fff;overflow:hidden"><div class="abs" style="left:-3px;top:0;font-size:12px;white-space:nowrap;line-height:12px">Hit the &quot;Running Stop&quot; button (Red Square) to halt animation.</div></div>
<div class="abs" style="left:773px;top:15px;width:8px;height:575px;background:linear-gradient(90deg,#fff 0,#fff 1px,#d2d2d2 1px,#d2d2d2 4px,#b4bcc4 4px,#b4bcc4 7px,#d0d4d8 7px)"></div>
<!--BOTTOM_END-->
<!--SECTIONS-->
</div>
</body>
</html>
